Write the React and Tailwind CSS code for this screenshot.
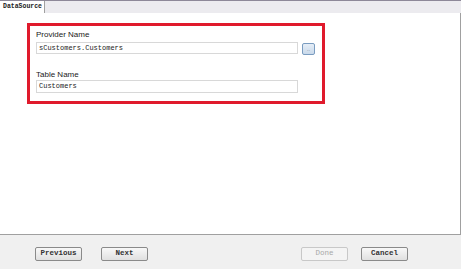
export default function App() {
  const btn =
    "w-[47px] h-[14px] border border-[#8a8a8a] rounded-[2px] bg-gradient-to-b from-[#f8f8f8] to-[#e0e0e0] text-[7.5px] font-semibold text-[#333] flex items-center justify-center";

  return (
    <div
      className="w-[461px] h-[269px] bg-[#f0f0f0] flex flex-col overflow-hidden"
      style={{ fontFamily: '"Liberation Sans", Arial, sans-serif' }}
    >
      {/* tab strip */}
      <div className="h-[13px] flex border-t border-[#8d8898] bg-[#ecebef]">
        <div
          className="w-[45px] h-[13px] bg-white border-r border-[#a0a0a0] text-[6.5px] font-bold text-[#222] pl-[3px] leading-[12px] whitespace-nowrap overflow-hidden"
          style={{ fontFamily: '"Liberation Mono", monospace' }}
        >
          DataSource
        </div>
      </div>

      {/* content */}
      <div className="h-[222px] bg-white border-r border-b border-[#a0a0a0] pl-[27px] pt-[10px]">
        <div className="w-[298px] h-[81px] border-[3px] border-[#e01a2c] pl-[6px] pt-[4px]">
          <div className="text-[8px] text-[#222] leading-[9px]">Provider Name</div>
          <div className="flex items-center gap-[4px] mt-[1px]">
            <div
              className="w-[262px] h-[12px] border border-[#d8d8d8] text-[7px] text-[#222] pl-[2px] leading-[10px]"
              style={{ fontFamily: '"Liberation Mono", monospace' }}
            >
              sCustomers.Customers
            </div>
            <div className="w-[13px] h-[12px] mt-[3px] border border-[#7a9cc0] rounded-[2px] bg-gradient-to-b from-[#e6eef7] to-[#c9d9ea] flex items-center justify-center text-[5px] text-[#5a6f88] leading-none">
              ..
            </div>
          </div>
          <div className="text-[8px] text-[#222] leading-[9px] mt-[15px]">Table Name</div>
          <div
            className="w-[262px] h-[13px] mt-[1px] border border-[#d8d8d8] text-[7px] text-[#222] pl-[2px] leading-[11px]"
            style={{ fontFamily: '"Liberation Mono", monospace' }}
          >
            Customers
          </div>
        </div>
      </div>

      {/* bottom bar */}
      <div
        className="flex-1 flex items-center pl-[35px] pr-[53px] pt-[4px]"
        style={{ fontFamily: '"Liberation Mono", monospace' }}
      >
        <div className={btn}>Previous</div>
        <div className={btn + " ml-[19px]"}>Next</div>
        <div className="ml-auto w-[47px] h-[14px] border border-[#c8c8c8] rounded-[2px] bg-[#f4f4f4] text-[7.5px] text-[#a8a8a8] flex items-center justify-center">
          Done
        </div>
        <div className={btn + " ml-[13px]"}>Cancel</div>
      </div>
    </div>
  );
}
